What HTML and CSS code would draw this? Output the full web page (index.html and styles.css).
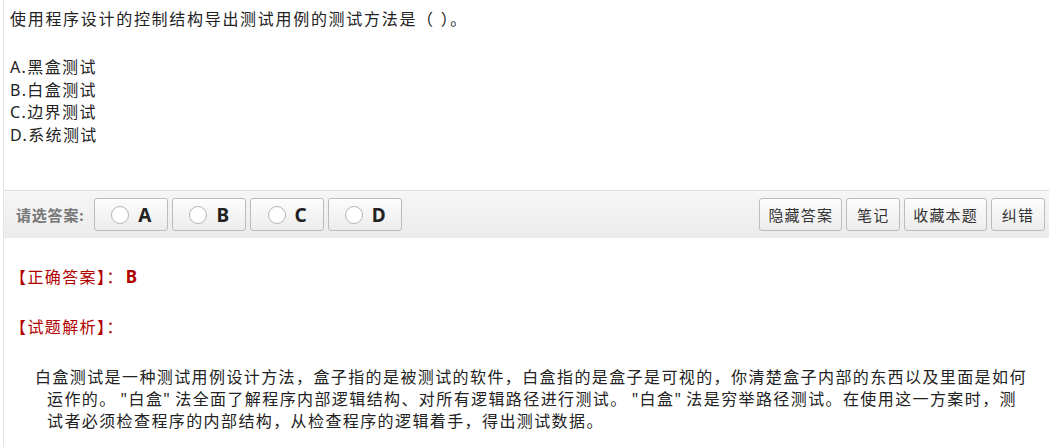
FILE: index.html
```html
<!DOCTYPE html>
<html lang="zh-CN">
<head>
    <meta charset="UTF-8">
    <title>试题</title>
    <link rel="stylesheet" href="styles.css">
</head>
<body>
    <div class="page">
        <div class="question">
            <p class="title">使用程序设计的控制结构导出测试用例的测试方法是（ ）。</p>
            <ul class="options">
                <li>A.黑盒测试</li>
                <li>B.白盒测试</li>
                <li>C.边界测试</li>
                <li>D.系统测试</li>
            </ul>
        </div>

        <div class="bar">
            <span class="label">请选答案:</span>
            <div class="choices">
                <button class="choice"><span class="radio"></span>A</button>
                <button class="choice"><span class="radio"></span>B</button>
                <button class="choice"><span class="radio"></span>C</button>
                <button class="choice"><span class="radio"></span>D</button>
            </div>
            <div class="tools">
                <button class="tool">隐藏答案</button>
                <button class="tool">笔记</button>
                <button class="tool">收藏本题</button>
                <button class="tool">纠错</button>
            </div>
        </div>

        <div class="answer">
            <p class="right">【正确答案】：<b>B</b></p>
            <p class="head">【试题解析】：</p>
            <p class="explain">白盒测试是一种测试用例设计方法，盒子指的是被测试的软件，白盒指的是盒子是可视的，你清楚盒子内部的东西以及里面是如何运作的。<span class="q">"白盒"</span>法全面了解程序内部逻辑结构、对所有逻辑路径进行测试。<span class="q">"白盒"</span>法是穷举路径测试。在使用这一方案时，测试者必须检查程序的内部结构，从检查程序的逻辑着手，得出测试数据。</p>
        </div>
    </div>
</body>
</html>
```

FILE: styles.css
```css
body {
    margin: 0;
    font-family: "Noto Sans", "Noto Sans CJK SC", sans-serif;
    font-size: 16px;
    color: #222;
    background: #fff;
}

.page {
    margin-left: 3px;
    border-left: 1px solid #e2e2e2;
    min-height: 447px;
}

p {
    margin: 0;
}

.question {
    padding: 8px 0 0 6px;
    height: 182px;
    letter-spacing: 1.4px;
    line-height: 22px;
}

.title {
    letter-spacing: 1.7px;
}

.options {
    list-style: none;
    margin: 26px 0 0;
    padding: 0;
    line-height: 22.5px;
}

.bar {
    display: flex;
    align-items: center;
    height: 48px;
    border-top: 1px solid #dcdcdc;
    background: linear-gradient(#f6f6f6, #ebebeb);
    padding: 0 4px 0 12px;
    box-sizing: border-box;
}

.label {
    font-size: 15px;
    font-weight: bold;
    color: #777;
    letter-spacing: 0.8px;
    margin-right: 10px;
}

.choices {
    display: flex;
    gap: 4px;
}

button {
    font-family: inherit;
    height: 33px;
    border: 1px solid #bcbcbc;
    border-radius: 3px;
    background: linear-gradient(#fdfdfd, #ececec);
    cursor: pointer;
    padding: 0;
}

.choice {
    width: 74px;
    display: flex;
    align-items: center;
    justify-content: center;
    gap: 9px;
    font-size: 19px;
    font-weight: bold;
    color: #222;
}

.radio {
    width: 16px;
    height: 16px;
    border: 1px solid #b5b5b5;
    border-radius: 50%;
    background: #fff;
}

.tools {
    display: flex;
    gap: 4px;
    margin-left: auto;
}

.tool {
    font-size: 15px;
    color: #333;
    min-width: 54px;
    padding: 0 8px;
    letter-spacing: 1.2px;
}

.answer {
    padding: 28px 20px 0 6px;
    line-height: 22px;
    letter-spacing: 1.4px;
}

.right, .head {
    color: #b00000;
}

.right b {
    font-size: 17px;
    margin-left: 2px;
}

.head {
    margin-top: 28px;
}

.explain {
    margin-top: 28px;
    padding-left: 37px;
    text-indent: -12px;
    color: #222;
}

.q {
    margin: 0 4px;
}
```
